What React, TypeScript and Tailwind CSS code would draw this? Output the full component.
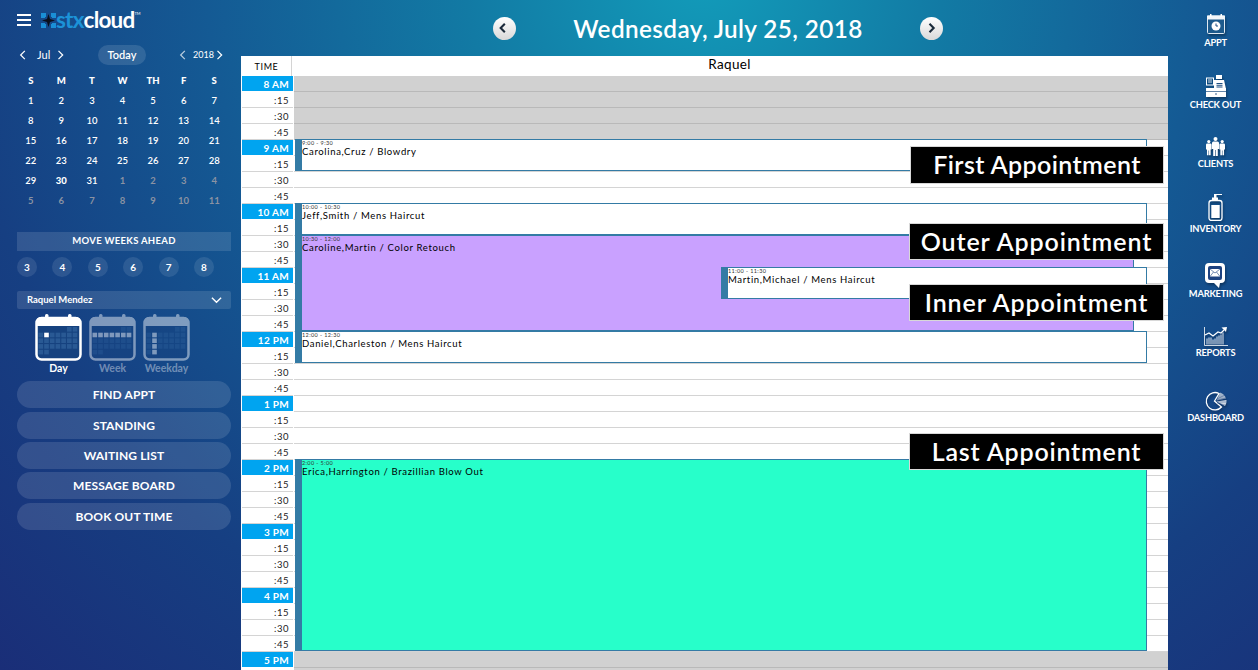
const hours = ["8 AM","9 AM","10 AM","11 AM","12 PM","1 PM","2 PM","3 PM","4 PM","5 PM"];
const weeks = [
  ["1","2","3","4","5","6","7"],["8","9","10","11","12","13","14"],["15","16","17","18","19","20","21"],
  ["22","23","24","25","26","27","28"],["29","30","31","1","2","3","4"],["5","6","7","8","9","10","11"],
];

function Chevron({ dir, className }: { dir: "l" | "r" | "d"; className: string }) {
  const d = dir === "l" ? "M7 1 2 6l5 5" : dir === "r" ? "M3 1l5 5-5 5" : "M1 3l5 5 5-5";
  return <svg viewBox="0 0 12 12" className={className} fill="none" stroke="currentColor" strokeWidth="1.5"><path d={d} /></svg>;
}

function ViewIcon({ mode }: { mode: "day" | "week" | "weekday" }) {
  const cells = [];
  for (let r = 0; r < 5; r++) for (let c = 0; c < 7; c++) {
    const hidden = (r === 0 && c < 5) || (r === 4 && c > 1);
    if (hidden) continue;
    const lit = mode === "day" ? r === 1 && c === 1 : mode === "week" ? r === 1 : c === 1 && r > 0;
    cells.push(<rect key={`${r}-${c}`} x={3.5 + c * 5.7} y={13 + r * 5.7} width="4.6" height="4.6" fill={lit ? "#fff" : "#3a6ea5"} fillOpacity={lit ? 1 : 0.55} />);
  }
  return (
    <svg viewBox="0 0 47 47" className="h-[47px] w-[47px]">
      <rect x="1.5" y="4" width="44" height="41.5" rx="5" fill="#16427f" stroke="#fff" strokeWidth="2.5" />
      <path d="M1 12V8a5 5 0 0 1 5-5h35a5 5 0 0 1 5 5v4z" fill="#fff" />
      <rect x="10" y="0" width="3.5" height="6" rx="1.5" fill="#fff" />
      <rect x="33" y="0" width="3.5" height="6" rx="1.5" fill="#fff" />
      {cells}
    </svg>
  );
}

function Logo() {
  return (
    <div className="flex items-center">
      <svg viewBox="0 0 15 15" className="h-[15px] w-[15px]">
        <path d="M0 0h5v4H4v1H0zM10 0h5v5h-4V4h-1zM0 10h4v1h1v4H0zM11 10h4v5h-5v-4h1z" fill="#1a8fd6" />
        <path d="M7.5 1 9 6l5 1.5L9 9l-1.500 5L6 9 1 7.500 6 6z" fill="#0a0f1c" />
      </svg>
      <span className="text-[22.500px] leading-[16px] font-bold tracking-[-0.8px] text-[#1c93d8]">stx</span>
      <span className="text-[22.500px] leading-[16px] font-bold tracking-[-0.8px] text-white">cloud</span>
      <span className="self-start text-[4px] leading-[4px] text-white">TM</span>
    </div>
  );
}

const iconShadow = "drop-shadow-[1px_2px_1px_rgba(0,0,0,0.3)]";

function ApptIcon() {
  return (
    <svg viewBox="0 0 18 20" className={`h-[20px] w-[18px] ${iconShadow}`}>
      <rect x="0.500" y="2" width="17" height="17.500" rx="1" fill="#1d5a8c" stroke="#dfe9f2" />
      <rect x="0" y="1.500" width="18" height="4" fill="#f4f7fa" />
      <rect x="3" y="0" width="1.500" height="3" fill="#fff" />
      <rect x="13.500" y="0" width="1.500" height="3" fill="#fff" />
      <circle cx="9" cy="12" r="4.500" fill="#fff" />
      <path d="M9 9.500V12h2" stroke="#1d4d80" strokeWidth="1" fill="none" />
    </svg>
  );
}
function CheckoutIcon() {
  return (
    <svg viewBox="0 0 20 22" className={`h-[22px] w-[20px] ${iconShadow}`}>
      <rect x="10" y="0" width="6" height="4" fill="#fff" />
      <rect x="0.500" y="3" width="7" height="7" fill="none" stroke="#fff" />
      <path d="M2 5h4M2 7h4" stroke="#fff" strokeWidth="0.800" />
      <path d="M8 5h10l2 9H8z" fill="#fff" />
      <path d="M10.500 8h6v1.200h-6zM10.500 10.200h6v1.200h-6zM10.500 12.400h6v1h-6z" fill="#1d4d80" />
      <path d="M0 13h20v9H0z" fill="#fff" />
      <path d="M0 16.500h20" stroke="#1d4d80" strokeWidth="0.700" />
      <circle cx="10" cy="19" r="0.800" fill="#1d4d80" />
    </svg>
  );
}
function ClientsIcon() {
  const P = ({ x, y, s }: { x: number; y: number; s: number }) => (
    <g transform={`translate(${x} ${y}) scale(${s})`}>
      <circle cx="3.500" cy="2" r="2" fill="#fff" />
      <path d="M0 6a1.500 1.500 0 0 1 1.500-1.500h4A1.500 1.500 0 0 1 7 6v6H5.800v7H3.800v-6h-.6v6H1.200v-7H0z" fill="#fff" />
    </g>
  );
  return (
    <svg viewBox="0 0 19 19" className={`h-[19px] w-[19px] ${iconShadow}`}>
      <P x={0} y={3} s={0.8} /><P x={13.400} y={3} s={0.8} /><P x={6} y={0} s={1} />
    </svg>
  );
}
function InventoryIcon() {
  return (
    <svg viewBox="0 0 15 27" className={`h-[27px] w-[15px] ${iconShadow}`}>
      <path d="M6 0h8v1H8.500v3H6z" fill="#fff" />
      <rect x="4" y="3.500" width="6" height="3" fill="#fff" />
      <rect x="1" y="6.500" width="13" height="20" rx="2.500" fill="none" stroke="#fff" strokeWidth="1.300" />
      <rect x="3.300" y="11" width="8.400" height="13" fill="#fff" />
    </svg>
  );
}
function MarketingIcon() {
  return (
    <svg viewBox="0 0 20 25" className={`h-[25px] w-[20px] ${iconShadow}`}>
      <path d="M4 0h12a4 4 0 0 1 4 4v12a4 4 0 0 1-4 4h-1l-1 5-5-5H4a4 4 0 0 1-4-4V4a4 4 0 0 1 4-4z" fill="#fff" />
      <rect x="3" y="3" width="14" height="14" rx="2" fill="#1d4280" />
      <rect x="5" y="6" width="10" height="7.500" fill="#fff" />
      <path d="M5 6l5 4 5-4M5 13.500l3.500-4.500M15 13.500 11.500 9" fill="none" stroke="#1d4280" strokeWidth="0.600" />
    </svg>
  );
}
function ReportsIcon() {
  return (
    <svg viewBox="0 0 24 19" className={`h-[19px] w-[24px] ${iconShadow}`}>
      <path d="M0.500 0v18.500H24" fill="none" stroke="#fff" strokeWidth="0.800" />
      <path d="M3 17.500v-6M5 17.500v-7M7 17.500v-7M9 17.500v-5M11 17.500v-6M13 17.500v-8M15 17.500v-9M17 17.500v-10M19 17.500v-12" stroke="#dfe7f2" strokeWidth="1" />
      <path d="M1 8l4-2 4 3 5-4 3 1 3-3" fill="none" stroke="#fff" strokeWidth="1.200" />
      <path d="M17.500 0.500 23 0l-1 5z" fill="#fff" />
    </svg>
  );
}
function DashboardIcon() {
  return (
    <svg viewBox="0 0 22 20" className={`h-[20px] w-[22px] ${iconShadow}`}>
      <path d="M14 2.500A8.700 8.700 0 1 0 16.500 16L9.500 10z" fill="none" stroke="#fff" strokeWidth="1.300" />
      <path d="M11.500 9.500 15 1.500a9 9 0 0 1 6 6z" fill="#fff" fillOpacity="0.600" />
      <path d="M11.500 10.500 21.500 9a9 9 0 0 1-1.500 6z" fill="#fff" fillOpacity="0.800" />
      <path d="M12 8l8-4M12 9l9-2M12 11l9 0M12 12l8 2" stroke="#1d4280" strokeWidth="0.400" />
    </svg>
  );
}

const navItems = [
  { label: "APPT", box: "h-[61px] gap-[4px]", icon: <ApptIcon /> },
  { label: "CHECK OUT", box: "h-[62px] gap-[3px]", icon: <CheckoutIcon /> },
  { label: "CLIENTS", box: "h-[57px] gap-[3px]", icon: <ClientsIcon /> },
  { label: "INVENTORY", box: "h-[69px] gap-[3px]", icon: <InventoryIcon /> },
  { label: "MARKETING", box: "h-[64px] gap-[1px]", icon: <MarketingIcon /> },
  { label: "REPORTS", box: "h-[64px] gap-[2px]", icon: <ReportsIcon /> },
  { label: "DASHBOARD", box: "h-[60px] gap-[2px]", icon: <DashboardIcon /> },
];

function Appt({ pos, time, name }: { pos: string; time: string; name: string }) {
  return (
    <div className={`absolute flex border border-[#347ba5] ${pos}`}>
      <div className="w-[6px] shrink-0 bg-[#347ba5]" />
      <div className="min-w-0 text-black">
        <div className="h-[6px] text-[5.500px] leading-[6px] tracking-[0.4px] text-[#333]">{time}</div>
        <div className="text-[9.500px] leading-[12px] font-normal tracking-[0.66px]">{name}</div>
      </div>
    </div>
  );
}

function Tag({ pos, children }: { pos: string; children: string }) {
  return (
    <div className={`absolute flex items-center justify-center border border-[#d8d8d8] bg-black text-[25px] font-semibold text-white ${pos}`}>
      {children}
    </div>
  );
}

export default function App() {
  return (
    <div className="flex h-[670px] w-[1258px] overflow-hidden bg-[radial-gradient(ellipse_at_56%_-4%,#129cba_0%,#127aa4_24%,#145a94_50%,#163f82_75%,#1a2e78_100%)] font-[Lato,sans-serif] text-white">
      <aside className="w-[241px] shrink-0 pr-[10px] pl-[17px]">
        <div className="flex h-[40px] items-center">
          <div className="flex w-[24px] flex-col gap-[3px]">
            <span className="h-[2px] w-[14px] bg-white" /><span className="h-[2px] w-[14px] bg-white" /><span className="h-[2px] w-[14px] bg-white" />
          </div>
          <Logo />
        </div>
        <div className="mt-[5px] flex h-[20px] items-center text-[11px] whitespace-nowrap">
          <Chevron dir="l" className="ml-[2px] h-[10px] w-[10px] shrink-0" />
          <span className="ml-[8px] w-[12px] text-center">Jul</span>
          <Chevron dir="r" className="ml-[7px] h-[10px] w-[10px] shrink-0" />
          <span className="ml-[32px] flex h-[20px] w-[48px] shrink-0 items-center justify-center rounded-full bg-white/12 text-[11px] font-semibold">Today</span>
          <Chevron dir="l" className="ml-[33px] h-[10px] w-[10px] shrink-0 opacity-70" />
          <span className="ml-[4px] w-[19px] text-center text-[9px]">2018</span>
          <Chevron dir="r" className="ml-[3px] h-[10px] w-[10px] shrink-0" />
        </div>
        <div className="mt-[6px] -ml-[1.500px] grid w-[214px] grid-cols-7 text-center">
          {["S","M","T","W","TH","F","S"].map((d, i) => (
            <div key={i} className="h-[20px] text-[9.500px] leading-[20px] font-black">{d}</div>
          ))}
          {weeks.flatMap((w, r) => w.map((d, i) => {
            const grey = (r === 4 && i > 2) || r === 5;
            const bold = r === 4 && i === 1;
            return (
              <div key={`${r}-${i}`} className={`h-[20px] text-[9.500px] leading-[20px] ${grey ? "font-bold text-[#8b93a3]" : bold ? "font-black" : "font-semibold"}`}>{d}</div>
            );
          }))}
        </div>
        <div className="mt-[21px] flex h-[19px] items-center justify-center bg-white/12 text-[9.500px] font-bold tracking-[0.3px]">MOVE WEEKS AHEAD</div>
        <div className="mt-[6px] flex h-[20px] gap-[15.400px]">
          {["3","4","5","6","7","8"].map(n => (
            <span key={n} className="flex h-[20px] w-[20px] items-center justify-center rounded-full bg-white/10 text-[10px] font-bold">{n}</span>
          ))}
        </div>
        <div className="mt-[14px] flex h-[18px] items-center justify-between rounded-[2px] bg-white/12 pr-[9px] pl-[10px] text-[9.500px] font-bold">
          <span>Raquel Mendez</span>
          <Chevron dir="d" className="h-[11px] w-[11px]" />
        </div>
        <div className="mt-[5px] ml-[18px] flex h-[47px] gap-[7px]">
          <ViewIcon mode="day" />
          <div className="opacity-45"><ViewIcon mode="week" /></div>
          <div className="opacity-45"><ViewIcon mode="weekday" /></div>
        </div>
        <div className="ml-[18px] flex h-[20px] items-start pt-[2px] text-[10.500px] leading-[10px] font-bold">
          <span className="w-[47px] text-center">Day</span>
          <span className="ml-[7px] w-[47px] text-center text-white/40">Week</span>
          <span className="ml-[7px] w-[47px] text-center text-white/40">Weekday</span>
        </div>
        <div className="flex flex-col">
          {[["FIND APPT",""],["STANDING","mt-[4px]"],["WAITING LIST","mt-[3px]"],["MESSAGE BOARD","mt-[3px]"],["BOOK OUT TIME","mt-[4px]"]].map(([t, m]) => (
            <div key={t} className={`flex h-[27px] items-center justify-center rounded-full bg-white/12 text-[12px] font-bold tracking-[0.12px] ${m}`}>{t}</div>
          ))}
        </div>
      </aside>

      <main className="flex w-[927px] shrink-0 flex-col">
        <div className="flex h-[56px] shrink-0 items-center justify-center pl-[27px]">
          <div className="flex w-[451px] items-center justify-between">
            <span className="flex h-[23px] w-[23px] items-center justify-center rounded-full bg-gradient-to-b from-white to-[#d9d9d9] text-[#1b2a3a]"><Chevron dir="l" className="h-[10px] w-[10px] stroke-[2.5]" /></span>
            <h1 className="pt-[1px] text-[24.300px] leading-[32px] font-semibold tracking-[0.4px]">Wednesday, July 25, 2018</h1>
            <span className="flex h-[23px] w-[23px] items-center justify-center rounded-full bg-gradient-to-b from-white to-[#d9d9d9] text-[#1b2a3a]"><Chevron dir="r" className="h-[10px] w-[10px] stroke-[2.5]" /></span>
          </div>
        </div>
        <div className="flex min-h-0 flex-1 flex-col bg-white text-black">
          <div className="flex h-[20px] shrink-0">
            <div className="ml-[1px] flex w-[50px] items-center justify-center border-r border-[#d4d4d4] pt-[2px] text-[9px] tracking-[0.6px]">TIME</div>
            <div className="flex-1 pr-[1px] text-center text-[13.500px] leading-[17px] tracking-[0.3px]">Raquel</div>
          </div>
          <div className="relative min-h-0 flex-1 overflow-hidden">
            {hours.flatMap((h, hi) => ["", ":15"].concat(hi === 9 ? [] : [":30", ":45"]).map((q, qi) => {
              const closed = hi === 0 || hi === 9;
              return (
                <div key={`${h}${q}`} className="flex h-[16px]">
                  <div className={`ml-[1px] w-[51px] shrink-0 border-b pr-[4px] text-right leading-[17px] ${qi === 0 ? "border-white bg-[#00a4f0] text-[10px] font-bold tracking-[0.3px] text-white" : "border-[#d4d4d4] text-[9.500px] tracking-[0.5px] text-[#222]"}`}>{hi === 9 && qi === 1 ? "" : q || h}</div>
                  <div className={`ml-[1px] flex-1 border-b ${closed ? "border-[#b9b9b9] bg-[#d1d1d1]" : "border-[#d4d4d4] bg-white"}`} />
                </div>
              );
            }))}
            <Appt pos="left-[54px] top-[63px] h-[32px] w-[852px] bg-white" time="9:00 - 9:30" name="Carolina,Cruz / Blowdry" />
            <Appt pos="left-[54px] top-[127px] h-[32px] w-[852px] bg-white" time="10:00 - 10:30" name="Jeff,Smith / Mens Haircut" />
            <Appt pos="left-[54px] top-[159px] h-[96px] w-[839px] bg-[#c9a1ff]" time="10:30 - 12:00" name="Caroline,Martin / Color Retouch" />
            <Appt pos="left-[480px] top-[191px] h-[32px] w-[426px] bg-white" time="11:00 - 11:30" name="Martin,Michael / Mens Haircut" />
            <Appt pos="left-[54px] top-[255px] h-[32px] w-[852px] bg-white" time="12:00 - 12:30" name="Daniel,Charleston / Mens Haircut" />
            <Appt pos="left-[54px] top-[383px] h-[192px] w-[852px] bg-[#27ffca]" time="2:00 - 5:00" name="Erica,Harrington / Brazillian Blow Out" />
            <Tag pos="left-[669px] top-[70px] h-[38px] w-[254px] tracking-[0.4px]">First Appointment</Tag>
            <Tag pos="left-[668px] top-[147px] h-[37px] w-[255px] tracking-[0.9px]">Outer Appointment</Tag>
            <Tag pos="left-[668px] top-[208px] h-[37px] w-[255px] tracking-[0.9px]">Inner Appointment</Tag>
            <Tag pos="left-[668px] top-[357px] h-[37px] w-[255px] tracking-[0.8px]">Last Appointment</Tag>
          </div>
        </div>
      </main>

      <nav className="flex flex-1 flex-col items-center pt-[14px] pl-[5px]">
        {navItems.map(n => (
          <div key={n.label} className={`flex shrink-0 flex-col items-center ${n.box}`}>
            {n.icon}
            <span className="text-[9.300px] leading-[10px] font-bold tracking-[-0.2px]">{n.label}</span>
          </div>
        ))}
      </nav>
    </div>
  );
}
